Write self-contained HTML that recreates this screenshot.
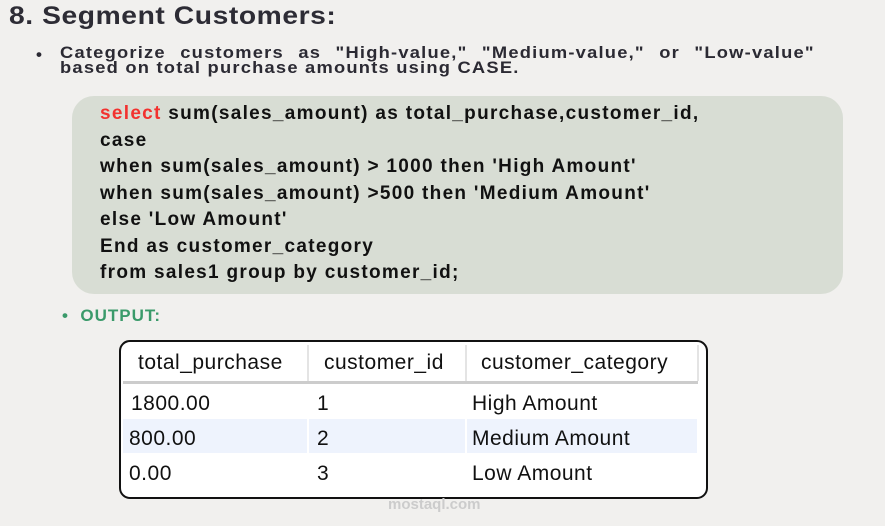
<!DOCTYPE html>
<html><head><style>
body{margin:0;width:885px;height:526px;background:#f1f0ee;position:relative;overflow:hidden;font-family:"Liberation Sans",sans-serif;color:#2b2a33}
.a{position:absolute}
h1{position:absolute;left:9px;top:2px;margin:0;font-size:25px;letter-spacing:0.5px;font-weight:bold;color:#2d2c35;transform:scaleX(1.13);transform-origin:0 0}
.b{left:60px;width:680px;font-size:16.5px;font-weight:bold;line-height:15px;letter-spacing:1.1px;white-space:nowrap;transform:scaleX(1.11);transform-origin:0 0}
.code{left:72px;top:96px;width:771px;height:198px;background:#d8ddd4;border-radius:22px}
.code div{position:absolute;left:28px;font-size:19px;letter-spacing:1.3px;font-weight:bold;color:#111}
.tbl{left:119px;top:340px;width:585px;height:155px;border:2px solid #111;border-radius:11px;background:#fff;font-size:21px;letter-spacing:0.5px;color:#111}
.c{position:absolute}
</style></head><body>
<h1>8. Segment Customers:</h1>
<div class="a" style="left:36px;top:45px;font-size:17px;font-weight:bold">•</div>
<div class="a b" style="top:46px;text-align:justify;text-align-last:justify;white-space:normal">Categorize customers as "High-value," "Medium-value," or "Low-value"</div>
<div class="a b" style="top:61px">based on total purchase amounts using CASE.</div>
<div class="a code">
<div style="top:7px"><span style="color:#f2322f">select</span> sum(sales_amount) as total_purchase,customer_id,</div>
<div style="top:34px">case</div>
<div style="top:60px">when sum(sales_amount) &gt; 1000 then 'High Amount'</div>
<div style="top:87px">when sum(sales_amount) &gt;500 then 'Medium Amount'</div>
<div style="top:113px">else 'Low Amount'</div>
<div style="top:140px">End as customer_category</div>
<div style="top:166px">from sales1 group by customer_id;</div>
</div>
<div class="a" style="left:62px;top:306px;font-size:17px;letter-spacing:1px;font-weight:bold;color:#3a9a6a">•&nbsp;&nbsp;OUTPUT:</div>
<div class="a tbl">
<div class="c" style="left:2px;top:3px;width:575px;height:36px;border-bottom:3px solid #ccc"></div>
<div class="c" style="left:186px;top:3px;width:2px;height:36px;background:#e4e4e4"></div>
<div class="c" style="left:344px;top:3px;width:2px;height:36px;background:#e4e4e4"></div>
<div class="c" style="left:576px;top:3px;width:2px;height:36px;background:#e4e4e4"></div>
<div class="c" style="left:2px;top:77px;width:574px;height:34px;background:#eef3fd"></div>
<div class="c" style="left:186px;top:77px;width:2px;height:34px;background:#fff"></div>
<div class="c" style="left:344px;top:77px;width:2px;height:34px;background:#fff"></div>
<div class="c" style="left:17px;top:9px">total_purchase</div>
<div class="c" style="left:203px;top:9px">customer_id</div>
<div class="c" style="left:360px;top:9px">customer_category</div>
<div class="c" style="left:10px;top:50px">1800.00</div>
<div class="c" style="left:196px;top:50px">1</div>
<div class="c" style="left:351px;top:50px">High Amount</div>
<div class="c" style="left:8px;top:85px">800.00</div>
<div class="c" style="left:196px;top:85px">2</div>
<div class="c" style="left:351px;top:85px">Medium Amount</div>
<div class="c" style="left:8px;top:120px">0.00</div>
<div class="c" style="left:196px;top:120px">3</div>
<div class="c" style="left:351px;top:120px">Low Amount</div>
</div>
<div class="a" style="left:388px;top:496px;font-size:15px;color:#ccc;font-weight:bold">mostaql.com</div>
</body></html>
